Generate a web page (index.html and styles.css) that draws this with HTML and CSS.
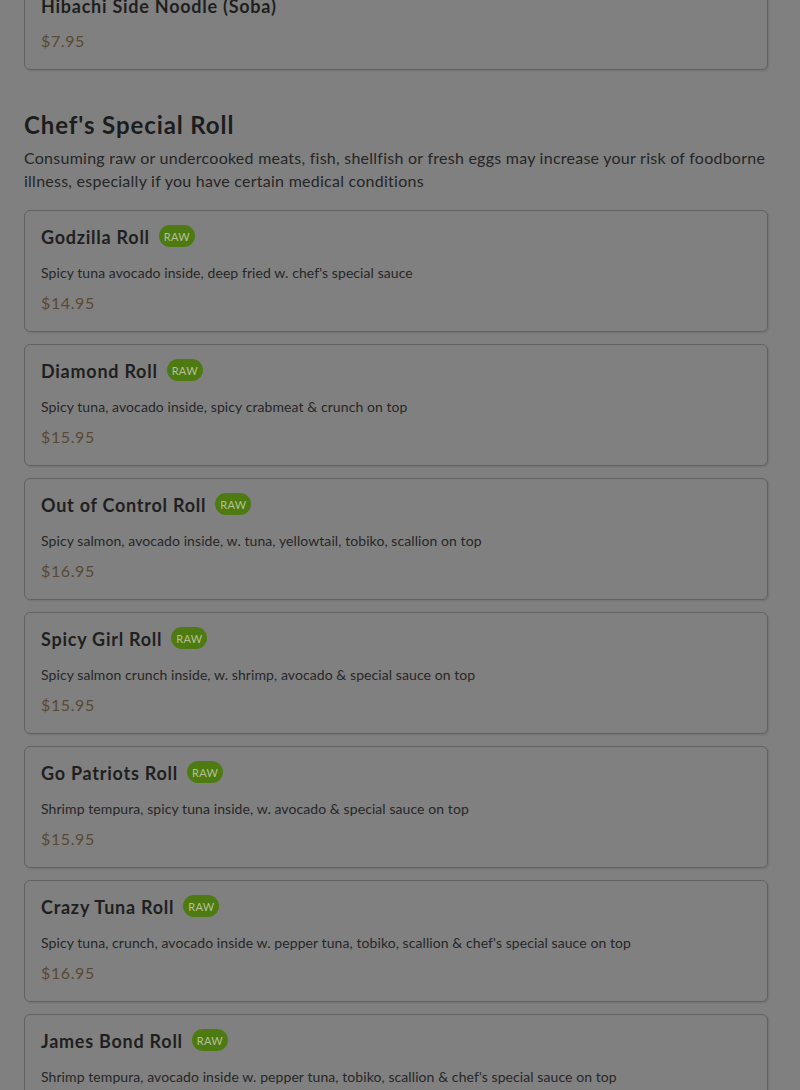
FILE: index.html
```html
<!DOCTYPE html>
<html lang="en">
<head>
<meta charset="utf-8">
<title>Menu</title>
<link rel="stylesheet" href="styles.css">
</head>
<body>
<main class="menu">
  <div class="item item-first">
    <div class="item-head"><h3 class="item-name">Hibachi Side Noodle (Soba)</h3></div>
    <div class="item-price item-price-nodesc">$7.95</div>
  </div>

  <section class="section">
    <h2 class="section-title">Chef's Special Roll</h2>
    <p class="section-note">Consuming raw or undercooked meats, fish, shellfish or fresh eggs may increase your risk of foodborne illness, especially if you have certain medical conditions</p>
    <div class="items">
      <div class="item">
        <div class="item-head"><h3 class="item-name">Godzilla Roll</h3><span class="badge">RAW</span></div>
        <p class="item-desc">Spicy tuna avocado inside, deep fried w. chef's special sauce</p>
        <div class="item-price">$14.95</div>
      </div>
      <div class="item">
        <div class="item-head"><h3 class="item-name">Diamond Roll</h3><span class="badge">RAW</span></div>
        <p class="item-desc">Spicy tuna, avocado inside, spicy crabmeat &amp; crunch on top</p>
        <div class="item-price">$15.95</div>
      </div>
      <div class="item">
        <div class="item-head"><h3 class="item-name">Out of Control Roll</h3><span class="badge">RAW</span></div>
        <p class="item-desc">Spicy salmon, avocado inside, w. tuna, yellowtail, tobiko, scallion on top</p>
        <div class="item-price">$16.95</div>
      </div>
      <div class="item">
        <div class="item-head"><h3 class="item-name">Spicy Girl Roll</h3><span class="badge">RAW</span></div>
        <p class="item-desc">Spicy salmon crunch inside, w. shrimp, avocado &amp; special sauce on top</p>
        <div class="item-price">$15.95</div>
      </div>
      <div class="item">
        <div class="item-head"><h3 class="item-name">Go Patriots Roll</h3><span class="badge">RAW</span></div>
        <p class="item-desc">Shrimp tempura, spicy tuna inside, w. avocado &amp; special sauce on top</p>
        <div class="item-price">$15.95</div>
      </div>
      <div class="item">
        <div class="item-head"><h3 class="item-name">Crazy Tuna Roll</h3><span class="badge">RAW</span></div>
        <p class="item-desc">Spicy tuna, crunch, avocado inside w. pepper tuna, tobiko, scallion &amp; chef's special sauce on top</p>
        <div class="item-price">$16.95</div>
      </div>
      <div class="item">
        <div class="item-head"><h3 class="item-name">James Bond Roll</h3><span class="badge">RAW</span></div>
        <p class="item-desc">Shrimp tempura, avocado inside w. pepper tuna, tobiko, scallion &amp; chef's special sauce on top</p>
        <div class="item-price">$16.95</div>
      </div>
    </div>
  </section>
</main>
</body>
</html>
```

FILE: styles.css
```css
html, body {
  margin: 0;
  padding: 0;
  background: #808080;
}
body {
  font-family: "Lato", "Open Sans", sans-serif;
  color: #232323;
  overflow: hidden;
  height: 1090px;
}
.menu {
  padding: 0 32px 0 24px;
}
.item {
  border: 1px solid #626262;
  border-radius: 6px;
  padding: 16px;
  box-shadow: 1px 1px 2px rgba(0, 0, 0, 0.12);
}
.item-first {
  margin-top: -21px;
}
.item-head {
  display: flex;
  align-items: flex-start;
  gap: 9px;
  height: 24px;
}
.item-name {
  margin: 0;
  font-size: 18px;
  font-weight: 700;
  line-height: 20px;
  letter-spacing: 0.75px;
  color: #1f1f1f;
}
.badge {
  display: inline-flex;
  align-items: center;
  justify-content: center;
  height: 22px;
  padding: 0 5px;
  border-radius: 11px;
  background: #4e7a12;
  color: #b3c197;
  font-size: 11px;
  font-weight: 400;
  letter-spacing: 0.3px;
  margin-top: -2px;
}
.item-desc {
  margin: 12px 0 0;
  font-size: 14px;
  line-height: 20px;
  letter-spacing: 0.08px;
  color: #272727;
}
.item-price {
  margin-top: 8px;
  font-size: 16px;
  line-height: 24px;
  letter-spacing: 0.6px;
  color: #5a4934;
}
.item-price-nodesc {
  margin-top: 9px;
}
.section {
  margin-top: 39px;
}
.section-title {
  margin: 0;
  font-size: 24px;
  font-weight: 700;
  line-height: 32px;
  letter-spacing: 0.9px;
  color: #1c1c1c;
}
.section-note {
  margin: 5px 0 18px;
  font-size: 16px;
  line-height: 23px;
  letter-spacing: 0.25px;
  color: #262626;
}
.items {
  display: flex;
  flex-direction: column;
  gap: 12px;
}
```
